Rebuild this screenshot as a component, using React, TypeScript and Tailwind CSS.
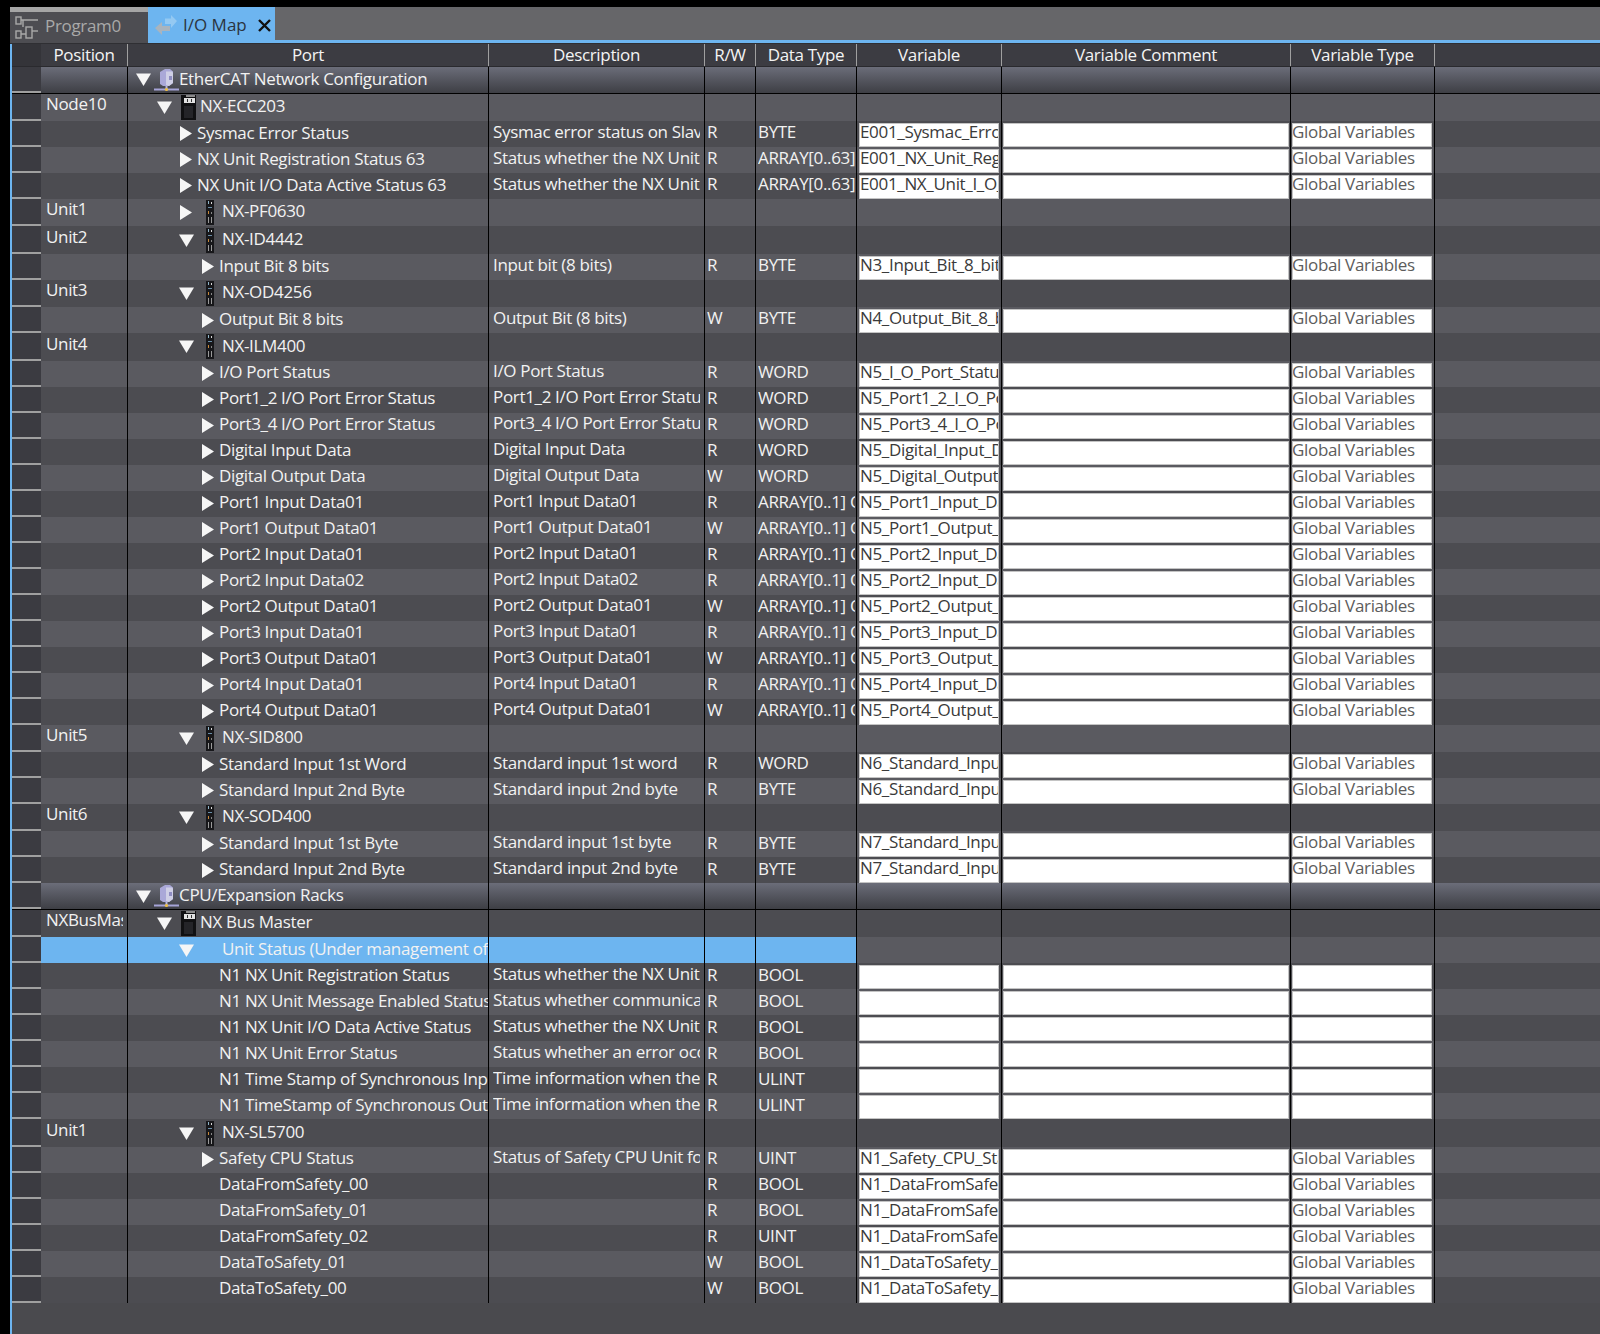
import React from "react";

type Kind = "g" | "d1" | "d2" | "du" | "l2" | "l3" | "n3";
type R = { pos?: string; kind: Kind; label: string; desc?: string; rw?: string; dt?: string; v?: string; blank?: boolean; sel?: boolean };

const lf = (kind: Kind, label: string, desc: string, rw: string, dt: string, v: string): R => ({ kind, label, desc, rw, dt, v });

const rows: R[] = [
  { pos: "Node10", kind: "d1", label: "NX-ECC203" },
  lf("l2", "Sysmac Error Status", "Sysmac error status on Slave Terminal", "R", "BYTE", "E001_Sysmac_Error_Status"),
  lf("l2", "NX Unit Registration Status 63", "Status whether the NX Unit is registered", "R", "ARRAY[0..63] OF BOOL", "E001_NX_Unit_Registration_Status_63"),
  lf("l2", "NX Unit I/O Data Active Status 63", "Status whether the NX Unit is active", "R", "ARRAY[0..63] OF BOOL", "E001_NX_Unit_I_O_Data_Active_Status_63"),
  { pos: "Unit1", kind: "d2", label: "NX-PF0630" },
  { pos: "Unit2", kind: "du", label: "NX-ID4442" },
  lf("l3", "Input Bit 8 bits", "Input bit (8 bits)", "R", "BYTE", "N3_Input_Bit_8_bits"),
  { pos: "Unit3", kind: "du", label: "NX-OD4256" },
  lf("l3", "Output Bit 8 bits", "Output Bit (8 bits)", "W", "BYTE", "N4_Output_Bit_8_bits"),
  { pos: "Unit4", kind: "du", label: "NX-ILM400" },
  lf("l3", "I/O Port Status", "I/O Port Status", "R", "WORD", "N5_I_O_Port_Status"),
  lf("l3", "Port1_2 I/O Port Error Status", "Port1_2 I/O Port Error Status", "R", "WORD", "N5_Port1_2_I_O_Port_Error_Status"),
  lf("l3", "Port3_4 I/O Port Error Status", "Port3_4 I/O Port Error Status", "R", "WORD", "N5_Port3_4_I_O_Port_Error_Status"),
  lf("l3", "Digital Input Data", "Digital Input Data", "R", "WORD", "N5_Digital_Input_Data"),
  lf("l3", "Digital Output Data", "Digital Output Data", "W", "WORD", "N5_Digital_Output_Data"),
  lf("l3", "Port1 Input Data01", "Port1 Input Data01", "R", "ARRAY[0..1] OF BYTE", "N5_Port1_Input_Data01"),
  lf("l3", "Port1 Output Data01", "Port1 Output Data01", "W", "ARRAY[0..1] OF BYTE", "N5_Port1_Output_Data01"),
  lf("l3", "Port2 Input Data01", "Port2 Input Data01", "R", "ARRAY[0..1] OF BYTE", "N5_Port2_Input_Data01"),
  lf("l3", "Port2 Input Data02", "Port2 Input Data02", "R", "ARRAY[0..1] OF BYTE", "N5_Port2_Input_Data02"),
  lf("l3", "Port2 Output Data01", "Port2 Output Data01", "W", "ARRAY[0..1] OF BYTE", "N5_Port2_Output_Data01"),
  lf("l3", "Port3 Input Data01", "Port3 Input Data01", "R", "ARRAY[0..1] OF BYTE", "N5_Port3_Input_Data01"),
  lf("l3", "Port3 Output Data01", "Port3 Output Data01", "W", "ARRAY[0..1] OF BYTE", "N5_Port3_Output_Data01"),
  lf("l3", "Port4 Input Data01", "Port4 Input Data01", "R", "ARRAY[0..1] OF BYTE", "N5_Port4_Input_Data01"),
  lf("l3", "Port4 Output Data01", "Port4 Output Data01", "W", "ARRAY[0..1] OF BYTE", "N5_Port4_Output_Data01"),
  { pos: "Unit5", kind: "du", label: "NX-SID800" },
  lf("l3", "Standard Input 1st Word", "Standard input 1st word", "R", "WORD", "N6_Standard_Input_1st_Word"),
  lf("l3", "Standard Input 2nd Byte", "Standard input 2nd byte", "R", "BYTE", "N6_Standard_Input_2nd_Byte"),
  { pos: "Unit6", kind: "du", label: "NX-SOD400" },
  lf("l3", "Standard Input 1st Byte", "Standard input 1st byte", "R", "BYTE", "N7_Standard_Input_1st_Byte"),
  lf("l3", "Standard Input 2nd Byte", "Standard input 2nd byte", "R", "BYTE", "N7_Standard_Input_2nd_Byte"),
  { kind: "g", label: "CPU/Expansion Racks" },
  { pos: "NXBusMaster", kind: "d1", label: "NX Bus Master" },
  { kind: "du", label: "Unit Status (Under management of NX Bus Master)", sel: true },
  { ...lf("n3", "N1 NX Unit Registration Status", "Status whether the NX Unit is registered", "R", "BOOL", ""), blank: true },
  { ...lf("n3", "N1 NX Unit Message Enabled Status", "Status whether communications are enabled", "R", "BOOL", ""), blank: true },
  { ...lf("n3", "N1 NX Unit I/O Data Active Status", "Status whether the NX Unit is active", "R", "BOOL", ""), blank: true },
  { ...lf("n3", "N1 NX Unit Error Status", "Status whether an error occurred", "R", "BOOL", ""), blank: true },
  { ...lf("n3", "N1 Time Stamp of Synchronous Input", "Time information when the input", "R", "ULINT", ""), blank: true },
  { ...lf("n3", "N1 TimeStamp of Synchronous Output", "Time information when the output", "R", "ULINT", ""), blank: true },
  { pos: "Unit1", kind: "du", label: "NX-SL5700" },
  lf("l3", "Safety CPU Status", "Status of Safety CPU Unit for monitoring", "R", "UINT", "N1_Safety_CPU_Status"),
  lf("n3", "DataFromSafety_00", "", "R", "BOOL", "N1_DataFromSafety_00"),
  lf("n3", "DataFromSafety_01", "", "R", "BOOL", "N1_DataFromSafety_01"),
  lf("n3", "DataFromSafety_02", "", "R", "UINT", "N1_DataFromSafety_02"),
  lf("n3", "DataToSafety_01", "", "W", "BOOL", "N1_DataToSafety_01"),
  lf("n3", "DataToSafety_00", "", "W", "BOOL", "N1_DataToSafety_00"),
];

const ArrowRight = () => (
  <svg width="12" height="15" viewBox="0 0 12 15" className="shrink-0"><polygon points="0,0 12,7.5 0,15" fill="#f6f6f6" /></svg>
);
const ArrowDown = () => (
  <svg width="15" height="13" viewBox="0 0 15 13" className="shrink-0"><polygon points="0,0.5 15,0.5 7.5,13" fill="#f6f6f6" /></svg>
);
const GroupIcon = () => (
  <svg width="25" height="24" viewBox="0 0 25 24" className="shrink-0">
    <path d="M6 4 L11 1 H16 L19 3.5 V15 L15 18 H9 L6 16 Z" fill="#aaa8d8" />
    <path d="M12 3.5 H18 L19 4.5 V15 L15 18 L12 17 Z" fill="#cfcfe6" />
    <rect x="15" y="8" width="3" height="4" fill="#8f8dc2" />
    <rect x="11.5" y="18" width="2" height="3" fill="#b9b8dc" />
    <rect x="0" y="20.5" width="25" height="2" fill="#a6a4d8" />
    <circle cx="12.5" cy="21.5" r="1.6" fill="#f0c040" />
  </svg>
);
const CouplerIcon = () => (
  <svg width="15" height="25" viewBox="0 0 15 25" className="shrink-0">
    <rect x="0" y="0" width="15" height="25" fill="#101012" />
    <rect x="5" y="0" width="9" height="2" fill="#8a8a8a" />
    <rect x="3" y="3" width="11" height="5" fill="#e2e2e2" />
    <rect x="6" y="4" width="1" height="3" fill="#333" />
    <rect x="10" y="4" width="1" height="3" fill="#333" />
    <rect x="3" y="11" width="9" height="12" fill="#242428" />
  </svg>
);
const ModuleIcon = () => (
  <svg width="8" height="25" viewBox="0 0 8 25" className="shrink-0">
    <rect x="0" y="0" width="8" height="25" fill="#17171a" />
    <rect x="2" y="1" width="1" height="3" fill="#8fb4c8" />
    <rect x="5" y="2" width="1" height="2" fill="#d8d8d8" />
    <rect x="2" y="7" width="4" height="1" fill="#6a8ea8" />
    <rect x="2" y="11" width="1" height="3" fill="#c98a3a" />
    <rect x="5" y="12" width="1" height="2" fill="#888" />
    <rect x="2" y="17" width="1" height="6" fill="#9a9a9a" />
    <rect x="5" y="17" width="1" height="6" fill="#9a9a9a" />
  </svg>
);

function PortCell({ r }: { r: R }) {
  const label = <span className="whitespace-nowrap relative -top-[1.5px]">{r.label}</span>;
  if (r.kind === "g")
    return <div className="flex items-center pl-[8px]"><ArrowDown /><span className="w-[3px] shrink-0" /><GroupIcon />{label}</div>;
  if (r.kind === "d1")
    return <div className="flex items-center pl-[29px]"><ArrowDown /><span className="w-[9px] shrink-0" /><CouplerIcon /><span className="w-[4px] shrink-0" />{label}</div>;
  if (r.kind === "d2")
    return <div className="flex items-center pl-[52px]"><ArrowRight /><span className="w-[14px] shrink-0" /><ModuleIcon /><span className="w-[8px] shrink-0" />{label}</div>;
  if (r.kind === "du")
    return (
      <div className="flex items-center pl-[51px]">
        <ArrowDown /><span className="w-[12px] shrink-0" />
        {r.sel ? <span className="w-[8px] shrink-0" /> : <ModuleIcon />}
        <span className="w-[8px] shrink-0" />{label}
      </div>
    );
  if (r.kind === "l2")
    return <div className="flex items-center pl-[52px]"><ArrowRight /><span className="w-[5px] shrink-0" />{label}</div>;
  if (r.kind === "l3")
    return <div className="flex items-center pl-[74px]"><ArrowRight /><span className="w-[5px] shrink-0" />{label}</div>;
  return <div className="flex items-center pl-[91px]">{label}</div>;
}

function Row({ r, i }: { r: R; i: number }) {
  const isGroup = r.kind === "g";
  const isDevice = r.kind === "d1" || r.kind === "d2" || (r.kind === "du" && !r.sel);
  const h = isGroup ? "h-[26.6px]" : isDevice ? "h-[27.4px]" : "h-[26px]";
  const bg = isGroup
    ? "bg-gradient-to-b from-[#6b6d79] to-[#3e3f45] border-b border-black"
    : i % 2 === 0
      ? "bg-[#5a5a60]"
      : "bg-[#4c4c51]";
  const sep = "border-r border-black";
  const blue = r.sel ? "bg-[#6db5f0]" : "";
  const hasInputs = !isDevice && !isGroup && !r.sel;
  return (
    <div className={`flex ${h} ${bg} text-[#f2f2f2]`}>
      <div className="w-[29px] shrink-0 bg-[#3b3b41] border-b-2 border-[#a0a0a0]" />
      <div className={`w-[87px] shrink-0 ${sep} pl-[5px] pr-[4px] ${blue} flex items-center pb-[7px]`}>
        <div className="overflow-hidden whitespace-nowrap w-full">{r.pos}</div>
      </div>
      <div className={`w-[361px] shrink-0 ${sep} ${blue} overflow-hidden`}>
        <div className="h-full flex items-center overflow-hidden pr-[1px]"><PortCell r={r} /></div>
      </div>
      <div className={`w-[216px] shrink-0 ${sep} ${blue} pl-[4px] pr-[4px] flex items-center pb-[5px]`}>
        <div className="overflow-hidden whitespace-nowrap w-full">{r.desc}</div>
      </div>
      <div className={`w-[51px] shrink-0 ${sep} ${blue} pl-[2px] flex items-center pb-[4px]`}>{r.rw}</div>
      <div className={`w-[101px] shrink-0 ${sep} ${blue} pl-[2px] pr-[1px] flex items-center pb-[4px]`}>
        <div className="overflow-hidden whitespace-nowrap w-full">{r.dt}</div>
      </div>
      <div className={`w-[145px] shrink-0 ${sep} pl-[2px] pr-[2px] pt-[2px] text-[#3a3a3a]`}>
        {hasInputs && (
          <div className="h-full bg-white border border-[#c4c4c4] overflow-hidden whitespace-nowrap leading-[16px]">{r.v}</div>
        )}
      </div>
      <div className={`w-[289px] shrink-0 ${sep} pl-[1px] pr-[1px] pt-[2px]`}>
        {hasInputs && <div className="h-full bg-white border border-[#c4c4c4]" />}
      </div>
      <div className={`w-[144px] shrink-0 ${sep} pl-[1px] pr-[2px] pt-[2px] text-[#5c5c5c]`}>
        {hasInputs && (
          <div className="h-full bg-white border border-[#c4c4c4] overflow-hidden whitespace-nowrap leading-[15px]">
            <span className="-ml-px block">{r.blank ? "" : "Global Variables"}</span>
          </div>
        )}
      </div>
      <div className="flex-1" />
    </div>
  );
}

const heads: [string, string][] = [
  ["Position", "w-[87px]"],
  ["Port", "w-[361px]"],
  ["Description", "w-[216px]"],
  ["R/W", "w-[51px]"],
  ["Data Type", "w-[101px]"],
  ["Variable", "w-[145px]"],
  ["Variable Comment", "w-[289px]"],
  ["Variable Type", "w-[144px]"],
];

export default function App() {
  return (
    <div className="w-[1600px] h-[1334px] bg-black pl-[10px] pt-[7px] flex flex-col overflow-hidden font-['Open_Sans','Noto_Sans',sans-serif] text-[17px] tracking-[-0.33px]">
      <div className="flex h-[37px] shrink-0 bg-[#2f2f33]">
        <div className="w-[138px] h-[36px] border-t-[5px] border-[#a5a5a5] bg-[#4d4d52] flex items-center pl-[5px] gap-[6px] text-[#a9a9a9]">
          <svg width="24" height="24" viewBox="0 0 24 24" fill="none" stroke="#a9a9a9" strokeWidth="1.4" className="shrink-0">
            <rect x="1" y="1" width="5" height="7" />
            <rect x="1" y="15" width="5" height="7" />
            <path d="M6 4 H23 M8 4 V11 M6 18 H11" />
            <rect x="11" y="11" width="6" height="11" />
            <path d="M17 15 H23" />
          </svg>
          <span className="relative -top-[2px]">Program0</span>
        </div>
        <div className="w-[127px] h-[36px] bg-[#6db5f0] flex items-center pl-[7px] text-[#2b3440]">
          <svg width="22" height="20" viewBox="0 0 22 20" className="shrink-0">
            <path d="M10 3.5 H16 V0 L22 6 L16 13 V9 H10 Z" fill="#94c9f2" />
            <path d="M15 11 H7 V7 L0 13 L7 20 V16 H15 Z" fill="#a9b4be" />
          </svg>
          <span className="ml-[6px] tracking-[0px]">I/O Map</span>
          <svg width="13" height="13" viewBox="0 0 13 13" className="ml-[11px] shrink-0" stroke="#111" strokeWidth="2.4"><path d="M1 1 L12 12 M12 1 L1 12" /></svg>
        </div>
        <div className="flex-1 h-[36px] bg-[#666669] border-b-[3px] border-[#6db5f0]" />
      </div>
      <div className="flex-1 border-l-2 border-[#6db5f0] bg-[#4a4a4e] min-h-0">
        <div className="flex h-[23px] bg-[#3c3c42] text-[#f4f4f4] border-b border-[#2a2a2e]">
          <div className="w-[29px] shrink-0 bg-[#343439]" />
          {heads.map(([t, w]) => (
            <div key={t} className={`${w} shrink-0 text-center border-r border-[#a0a0a0] leading-[22px]`}>{t}</div>
          ))}
          <div className="flex-1" />
        </div>
        <div className="flex h-[26.6px] bg-gradient-to-b from-[#6b6d79] to-[#3e3f45] border-b border-black text-[#f2f2f2]">
          <div className="w-[29px] shrink-0 bg-[#3b3b41] border-b-2 border-[#a0a0a0]" />
          <div className="w-[87px] shrink-0 border-r border-black" />
          <div className="w-[361px] shrink-0 border-r border-black flex items-center">
            <PortCell r={{ kind: "g", label: "EtherCAT Network Configuration" }} />
          </div>
          <div className="w-[216px] shrink-0 border-r border-black" />
          <div className="w-[51px] shrink-0 border-r border-black" />
          <div className="w-[101px] shrink-0 border-r border-black" />
          <div className="w-[145px] shrink-0 border-r border-black" />
          <div className="w-[289px] shrink-0 border-r border-black" />
          <div className="w-[144px] shrink-0 border-r border-black" />
          <div className="flex-1" />
        </div>
        {rows.map((r, i) => (
          <Row key={i} r={r} i={i} />
        ))}
      </div>
    </div>
  );
}
